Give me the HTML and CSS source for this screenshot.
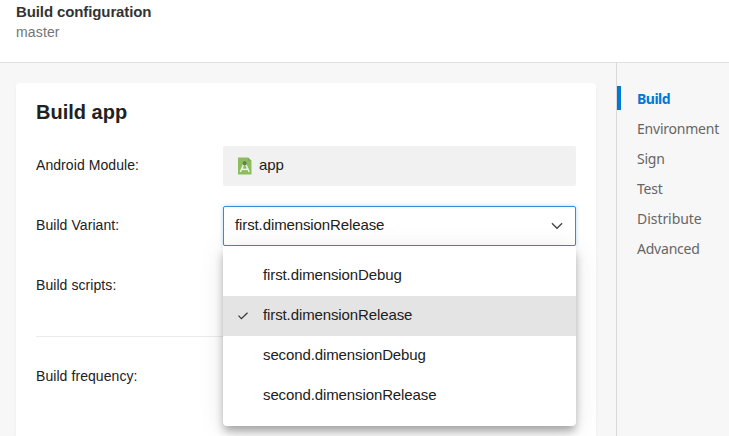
FILE: index.html
```html
<!DOCTYPE html>
<html lang="en">
<head>
<meta charset="utf-8">
<title>Build configuration</title>
<link rel="stylesheet" href="styles.css">
</head>
<body>
<header class="header">
  <h1 class="header-title">Build configuration</h1>
  <div class="header-branch">master</div>
</header>
<div class="content">
  <main class="main">
    <section class="card">
      <h2 class="card-title">Build app</h2>
      <div class="row">
        <span class="label">Android Module:</span>
        <div class="module">
          <svg class="module-icon" width="14" height="18" viewBox="0 0 14 18">
            <path d="M0 1Q0 .5 .5 .5H10L13.5 4V17Q13.5 17.5 13 17.5H.5Q0 17.5 0 17Z" fill="#8bbd5b"/>
            <path d="M10 .5V4H13.5Z" fill="#7eac54"/>
            <path d="M5.6 7.5L2.3 15M7.8 7.5L11.2 15M3 11.8Q6.7 13 10.6 11.8" fill="none" stroke="#edf3e7" stroke-width="1.5"/>
            <circle cx="6.7" cy="6.2" r="1.4" fill="#8b9a84" stroke="#60705a" stroke-width="1.2"/>
          </svg>
          <span>app</span>
        </div>
      </div>
      <div class="row">
        <span class="label">Build Variant:</span>
        <div class="select">
          <span>first.dimensionRelease</span>
          <svg width="12" height="8" viewBox="0 0 12 8"><path d="M.9 1.2L6 6.3L11.1 1.2" fill="none" stroke="#444" stroke-width="1.3"/></svg>
          <ul class="menu">
            <li class="option"><span class="check"></span>first.dimensionDebug</li>
            <li class="option option-selected"><span class="check"><svg width="10" height="8" viewBox="0 0 10 8"><path d="M.5 3.7L3.4 6.6L9.5 .7" fill="none" stroke="#333" stroke-width="1.2"/></svg></span>first.dimensionRelease</li>
            <li class="option"><span class="check"></span>second.dimensionDebug</li>
            <li class="option"><span class="check"></span>second.dimensionRelease</li>
          </ul>
        </div>
      </div>
      <div class="row"><span class="label">Build scripts:</span></div>
      <hr class="divider">
      <div class="row"><span class="label">Build frequency:</span></div>
    </section>
  </main>
  <nav class="nav">
    <a class="nav-item nav-active">Build</a>
    <a class="nav-item">Environment</a>
    <a class="nav-item">Sign</a>
    <a class="nav-item">Test</a>
    <a class="nav-item">Distribute</a>
    <a class="nav-item">Advanced</a>
  </nav>
</div>
</body>
</html>
```
FILE: styles.css
```css
* { box-sizing: border-box; }
body {
  margin: 0;
  height: 436px;
  overflow: hidden;
  display: flex;
  flex-direction: column;
  background: #f7f7f7;
  color: #212121;
  font: 15px/20px "Liberation Sans", Arial, sans-serif;
  letter-spacing: -.11px;
}
.header {
  flex: none;
  height: 63px;
  padding: 2px 16px;
  background: #fff;
  border-bottom: 1px solid #e0e0e0;
}
.header-title { margin: 0; font-size: 15px; line-height: 20px; color: #333; }
.header-branch { font-size: 14px; color: #757575; letter-spacing: .15px; }
.content { flex: 1; min-height: 0; display: flex; }
.main { width: 616px; padding: 20px 20px 0 16px; }
.card {
  height: 100%;
  padding: 17px 20px 0;
  background: #fff;
  border-radius: 4px 4px 0 0;
  box-shadow: 0 2px 4px rgba(0, 0, 0, .04);
}
.card-title { margin: 0 0 21px; font-size: 20px; line-height: 25px; letter-spacing: 0; }
.row { display: flex; align-items: center; height: 40px; margin-bottom: 20px; }
.row:last-child { margin-bottom: 0; }
.label { width: 187px; padding-bottom: 2px; font-size: 14px; letter-spacing: .07px; }
.module {
  flex: 1;
  height: 40px;
  padding: 0 15px;
  display: flex;
  align-items: center;
  gap: 7px;
  background: #f1f1f1;
  border-radius: 2px;
}
.module span, .select > span { padding-bottom: 2px; }
.select {
  position: relative;
  flex: 1;
  height: 40px;
  padding: 0 12px 0 11px;
  display: flex;
  align-items: center;
  justify-content: space-between;
  background: #fff;
  border: 1px solid #368dd6;
  border-radius: 2px;
  box-shadow: 0 0 4px rgba(0, 120, 215, .3);
}
.menu {
  position: absolute;
  top: 39px;
  left: -1px;
  width: 353px;
  margin: 0;
  padding: 10px 0;
  list-style: none;
  background: #fff;
  border-radius: 0 0 4px 4px;
  box-shadow: 0 6px 10px -1px rgba(0, 0, 0, .34), 0 3px 28px rgba(0, 0, 0, .09);
}
.option { height: 40px; display: flex; align-items: center; padding: 0 15px 2px; }
.option-selected { background: #e4e4e4; }
.check { width: 25px; height: 4px; padding-top: 2px; display: flex; align-items: center; }
.divider { height: 1px; margin: 30px 0 20px; border: 0; background: #ebebeb; }
.nav {
  flex: 1;
  padding-top: 21px;
  border-left: 1px solid #d9d9d9;
  color: #666;
  font: 14px/30px "Noto Sans", "Open Sans", sans-serif;
  letter-spacing: -.22px;
}
.nav-item { display: block; height: 30px; padding-left: 20px; white-space: nowrap; }
.nav-item:nth-child(5) { letter-spacing: -.05px; }
.nav-item.nav-active {
  height: 24px;
  margin: 2px 0 4px;
  padding-left: 16px;
  border-left: 4px solid #0078d7;
  line-height: 26px;
  font-weight: 700;
  letter-spacing: -.5px;
  color: #0078d7;
}
```
